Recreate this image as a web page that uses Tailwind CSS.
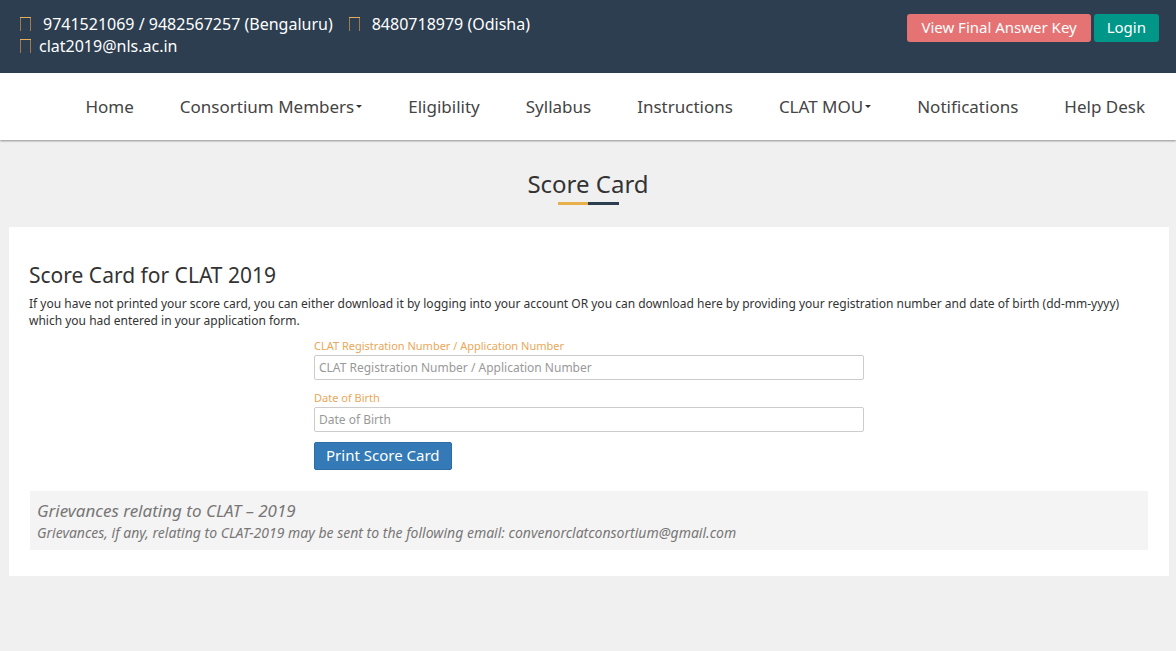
<!DOCTYPE html>
<html lang="en">
<head>
    <meta charset="UTF-8">
    <meta name="viewport" content="width=device-width, initial-scale=1.0">
    <title>CLAT 2019 - Score Card</title>
    <script src="https://cdn.jsdelivr.net/npm/@tailwindcss/browser@4"></script>
</head>
<body class="min-h-screen bg-[#f0f0f0] text-[#333] font-['Noto_Sans',sans-serif]">
    <!-- Top Bar -->
    <div class="bg-[#2c3e50] text-white flex justify-between items-start pl-5 pr-[17px] pt-[13px] pb-4">
        <ul class="flex flex-wrap max-w-[560px] gap-x-4 text-[16px] leading-[22px]">
            <li class="flex items-center gap-3">
                <svg class="w-[11px] h-[14px]" viewBox="0 0 11 14" fill="none"><path d="M0.5 14V0.5M10.5 14V0.5" stroke="#a17a4c"/><path d="M0 0.5H11" stroke="#e5ae5a"/></svg>
                <span>9741521069 / 9482567257 (Bengaluru)</span>
            </li>
            <li class="flex items-center gap-3">
                <svg class="w-[11px] h-[14px]" viewBox="0 0 11 14" fill="none"><path d="M0.5 14V0.5M10.5 14V0.5" stroke="#a17a4c"/><path d="M0 0.5H11" stroke="#e5ae5a"/></svg>
                <span>8480718979 (Odisha)</span>
            </li>
            <li class="flex items-center gap-2">
                <svg class="w-[11px] h-[14px]" viewBox="0 0 11 14" fill="none"><path d="M0.5 14V0.5M10.5 14V0.5" stroke="#a17a4c"/><path d="M0 0.5H11" stroke="#e5ae5a"/></svg>
                <a href="mailto:clat2019@nls.ac.in">clat2019@nls.ac.in</a>
            </li>
        </ul>
        <div class="flex gap-[3px] pt-px text-[15px] leading-[26px]">
            <a href="#" class="bg-[#e57373] rounded-[3px] px-[14px] pb-[2px]">View Final Answer Key</a>
            <a href="#" class="bg-[#009688] rounded-[3px] px-[13px] pb-[2px]">Login</a>
        </div>
    </div>

    <!-- Navigation -->
    <header class="bg-white text-[#444] shadow-[0_1px_2px_rgba(0,0,0,0.4)]">
        <nav class="flex justify-end pr-2 text-[17px] leading-[23px] whitespace-nowrap">
            <a href="#" class="px-[23px] py-[22px]">Home</a>
            <a href="#" class="px-[23px] py-[22px] flex items-center gap-[2px]">Consortium Members <span class="border-x-[3px] border-x-transparent border-t-[3px] border-t-[#333]"></span></a>
            <a href="#" class="px-[23px] py-[22px]">Eligibility</a>
            <a href="#" class="px-[23px] py-[22px]">Syllabus</a>
            <a href="#" class="px-[23px] py-[22px]">Instructions</a>
            <a href="#" class="px-[23px] py-[22px] flex items-center gap-[2px]">CLAT MOU <span class="border-x-[3px] border-x-transparent border-t-[3px] border-t-[#333]"></span></a>
            <a href="#" class="px-[23px] py-[22px]">Notifications</a>
            <a href="#" class="px-[23px] py-[22px]">Help Desk</a>
        </nav>
    </header>

    <!-- Page Title -->
    <div class="flex flex-col items-center pt-[29px] pb-[22px]">
        <h1 class="text-[24px] leading-[30px]">Score Card</h1>
        <div class="flex mt-[3px]">
            <span class="w-[30px] h-[3px] bg-[#e8b04a]"></span>
            <span class="w-[31px] h-[3px] bg-[#2c3e50]"></span>
        </div>
    </div>

    <!-- Score Card Form -->
    <main class="bg-white ml-[9px] mr-[7px] px-5 pt-[35px] pb-[26px]">
        <h2 class="text-[21px] leading-[26px]">Score Card for CLAT 2019</h2>
        <p class="mt-[7px] text-[12px] leading-[17px]">If you have not printed your score card, you can either download it by logging into your account OR you can download here by providing your registration number and date of birth (dd-mm-yyyy) which you had entered in your application form.</p>
        <form class="max-w-[550px] mx-auto mt-[9px] text-[12px]">
            <label for="regno" class="block mb-px text-[#eba757] text-[11px] leading-[16px]">CLAT Registration Number / Application Number</label>
            <input type="text" id="regno" placeholder="CLAT Registration Number / Application Number" class="block w-full h-[25px] px-1 border border-[#ccc] rounded-[2px] placeholder:text-[#999]">
            <label for="dob" class="block mt-[10px] mb-px text-[#eba757] text-[11px] leading-[16px]">Date of Birth</label>
            <input type="text" id="dob" placeholder="Date of Birth" class="block w-full h-[25px] px-1 border border-[#ccc] rounded-[2px] placeholder:text-[#999]">
            <button type="submit" class="block mt-[10px] px-[11px] pb-[2px] h-[28px] bg-[#337ab7] border border-[#2e6da4] rounded-[2px] text-white text-[15px] leading-[24px]">Print Score Card</button>
        </form>
        <div class="mt-[21px] mx-px px-[7px] pt-[9px] pb-[6px] bg-[#f5f4f4] text-[#777] italic leading-[22px]">
            <h3 class="text-[17px]">Grievances relating to CLAT – 2019</h3>
            <p class="text-[14px]">Grievances, if any, relating to CLAT-2019 may be sent to the following email: convenorclatconsortium@gmail.com</p>
        </div>
    </main>
</body>
</html>
